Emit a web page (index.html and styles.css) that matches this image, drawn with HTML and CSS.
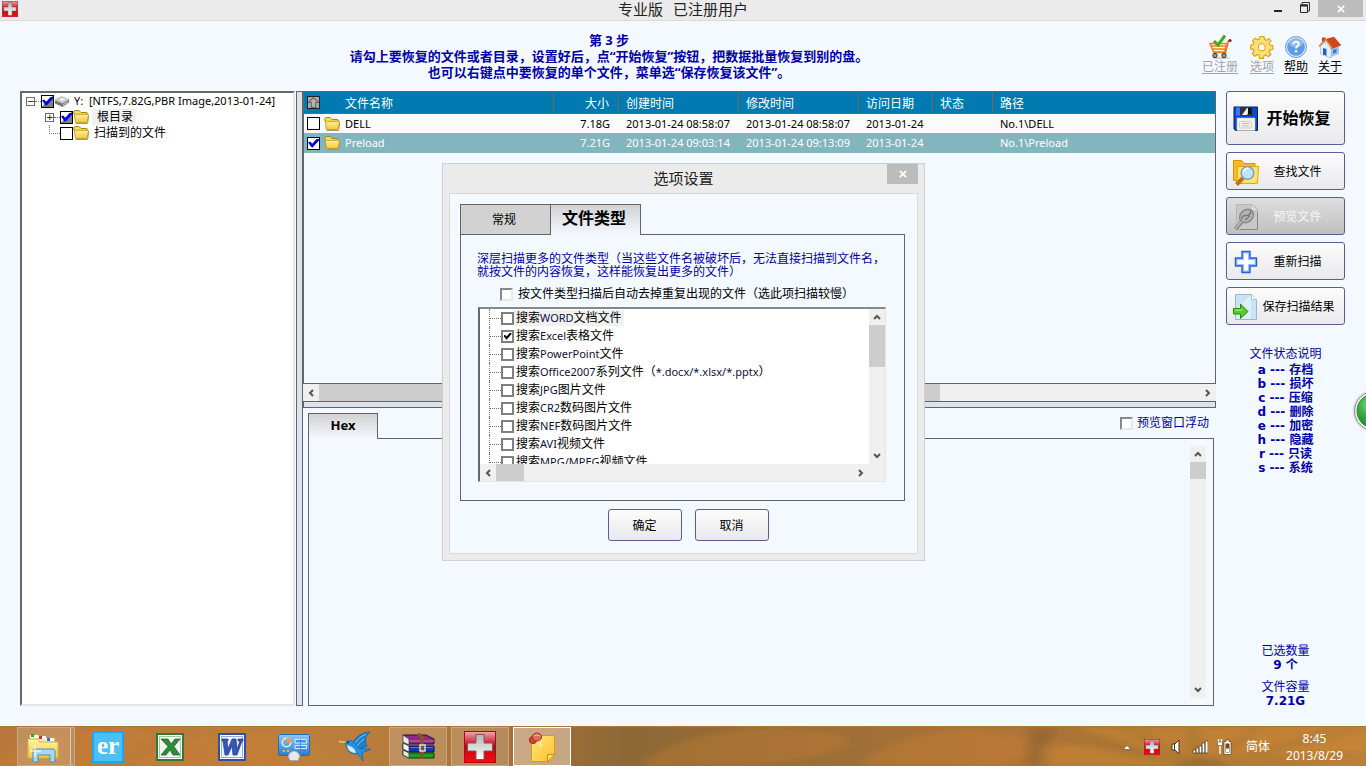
FILE: index.html
```html
<!DOCTYPE html>
<html lang="zh-CN">
<head>
<meta charset="utf-8">
<title>专业版 已注册用户</title>
<link rel="stylesheet" href="styles.css">
</head>
<body>
<svg class="defs" aria-hidden="true">
  <defs>
    <linearGradient id="gFolder" x1="0" y1="0" x2="0" y2="1"><stop offset="0" stop-color="#fff6a8"/><stop offset="1" stop-color="#f4c83c"/></linearGradient>
    <linearGradient id="gRed" x1="0" y1="0" x2="0" y2="1"><stop offset="0" stop-color="#f3a5ae"/><stop offset=".38" stop-color="#cf2036"/><stop offset=".5" stop-color="#c00818"/><stop offset="1" stop-color="#ff0a0a"/></linearGradient>
    <linearGradient id="gSilver" x1="0" y1="0" x2="0" y2="1"><stop offset="0" stop-color="#b4b4b4"/><stop offset="1" stop-color="#ffffff"/></linearGradient>
    <linearGradient id="gBlue" x1="0" y1="0" x2="0" y2="1"><stop offset="0" stop-color="#8cc8f6"/><stop offset="1" stop-color="#2a7cd0"/></linearGradient>
    <linearGradient id="gNote" x1="0" y1="0" x2="1" y2="1"><stop offset="0" stop-color="#ffe680"/><stop offset="1" stop-color="#ffc02a"/></linearGradient>
    <radialGradient id="gGreen" cx=".4" cy=".3" r=".7"><stop offset="0" stop-color="#8fdc8c"/><stop offset=".5" stop-color="#3cab45"/><stop offset="1" stop-color="#1c8a2e"/></radialGradient>
    <symbol id="cross" viewBox="0 0 32 32">
      <rect x="0.5" y="0.5" width="31" height="31" fill="url(#gRed)" stroke="#a80c18"/>
      <path d="M12 3.500h8v8.500h8.500v8H20v8.500h-8V20H3.500v-8H12z" fill="url(#gSilver)" stroke="#7c5a5a"/>
    </symbol>
    <symbol id="folder" viewBox="0 0 16 16">
      <path d="M3 14.500h11.500l1.300-8" fill="none" stroke="#a89868" stroke-width="1"/>
      <path d="M.7 3.500Q.7 1.500 2.500 1.500H6l2 2h5q1.500 0 1.500 1.500v2H3z" fill="#f8dc60" stroke="#b08008"/>
      <path d="M1 4l1.500 9.500H13q1 0 1.200-1L15.500 6q0-.7-.8-.7H4.500q-.8 0-1 .7z" fill="url(#gFolder)" stroke="#c09010" stroke-width=".8"/>
    </symbol>
    <symbol id="drive" viewBox="0 0 16 12">
      <path d="M1 5.500v3L8.500 12 15 7.500V4.500z" fill="#777"/>
      <path d="M1 5L7.500 1.500 15 4.500 8.500 8.500z" fill="#cfcfcf" stroke="#a8a8a8" stroke-width=".6"/>
      <path d="M5 4.500l3-1.500 3 1.300L8 6z" fill="#f4f4f4"/>
      <path d="M9 10l5-3.200" stroke="#d8d8d8"/>
    </symbol>
    <symbol id="up" viewBox="0 0 10 10"><path d="M5 .5L9.500 5H7v4.500H3V5H.5z" fill="#b4b4b4" stroke="#666"/></symbol>
    <symbol id="aLeft" viewBox="0 0 8 8"><path d="M6 1L3 4l3 3" fill="none" stroke="#555" stroke-width="2"/></symbol>
    <symbol id="aRight" viewBox="0 0 8 8"><path d="M2 1l3 3-3 3" fill="none" stroke="#555" stroke-width="2"/></symbol>
    <symbol id="aUp" viewBox="0 0 8 8"><path d="M1 6l3-3 3 3" fill="none" stroke="#555" stroke-width="2"/></symbol>
    <symbol id="aDown" viewBox="0 0 8 8"><path d="M1 2l3 3 3-3" fill="none" stroke="#555" stroke-width="2"/></symbol>
    <symbol id="x" viewBox="0 0 8 8"><path d="M.8.800l6.400 6.400M7.200.800L.8 7.200" stroke="#fff" stroke-width="1.700"/></symbol>
  </defs>
</svg>

<header class="titlebar">
  <svg class="app-icon"><use href="#cross"/></svg>
  <h1>专业版 &nbsp; 已注册用户</h1>
  <div class="win-buttons">
    <button aria-label="最小化"><svg width="8" height="12" viewBox="0 0 8 12"><path d="M0 9h8" stroke="#222" stroke-width="2"/></svg></button>
    <button aria-label="还原"><svg width="10" height="12" viewBox="0 0 10 12"><path d="M2 2V.5h7.500V9H8" fill="none" stroke="#333"/><path d="M.5 3h7v7.500h-7z" fill="none" stroke="#222"/><path d="M0 3.500h8" stroke="#222" stroke-width="2"/></svg></button>
    <button class="close" aria-label="关闭"><svg width="8" height="8"><use href="#x"/></svg></button>
  </div>
</header>

<section class="intro">
  <p class="steps">第 3 步<br>请勾上要恢复的文件或者目录，设置好后，点<q>开始恢复</q>按钮，把数据批量恢复到别的盘。<br>也可以右键点中要恢复的单个文件，菜单选<q>保存恢复该文件</q>。</p>
  <nav class="tools">
    <a class="off wide" href="#reg">
      <svg width="24" height="24" viewBox="0 0 24 24"><ellipse cx="13" cy="23" rx="9" ry="1" fill="#ccc"/><path d="M20.500 5.500l-3 12H6" fill="none" stroke="#e06a10" stroke-width="1.500"/><path d="M2 8.500h17l-2.500 8.500H5.500z" fill="#fff3dc" stroke="#ee8418" stroke-width="1.500"/><path d="M3 11h15M4 14h13" stroke="#ee8418" stroke-width="1.400"/><circle cx="7" cy="20.500" r="2.200" fill="#999" stroke="#333"/><circle cx="16" cy="20.500" r="2.200" fill="#999" stroke="#333"/><circle cx="22" cy="5.500" r="1.600" fill="#a01020"/><path d="M6 6l4 4L17 .5" fill="none" stroke="#43ad18" stroke-width="3"/></svg>
      已注册</a>
    <a class="off" href="#opt">
      <svg width="24" height="24" viewBox="0 0 24 24"><path d="M10 1.500h4l.5 3 1.800.8L19 3.500 21 6l-2 2.500.8 1.500 3 .5v4l-3 .5-.8 1.700 1.800 2.600-2.500 2.400-2.600-1.800-1.700.8-.5 2.600h-4L9 20.200l-1.700-.8-2.600 1.800-2.400-2.500L4 16l-.8-1.600-2.500-.5v-3.700l2.500-.7L4 8 2.500 5.700 5 3.200l2.400 1.600L9 4.200z" fill="#ffe078" stroke="#e3a11c" stroke-width="1.200"/><rect x="8.500" y="9" width="6.500" height="6.500" rx="2" fill="#fffdf0" stroke="#e3a11c"/></svg>
      选项</a>
    <a href="#help">
      <svg width="24" height="24" viewBox="0 0 24 24"><circle cx="12" cy="12" r="10.500" fill="#d8e6fb" stroke="#7898cc"/><circle cx="12" cy="12" r="8.800" fill="#5c9bea"/><ellipse cx="12" cy="8" rx="7" ry="4.500" fill="#fff" opacity=".3"/><path d="M9.300 9.500q0-2.700 2.700-2.700t2.700 2.300q0 1.500-1.500 2.300-1.200.7-1.200 2.100" fill="none" stroke="#fff" stroke-width="1.900"/><circle cx="12" cy="16.300" r="1.200" fill="#fff"/></svg>
      帮助</a>
    <a href="#about">
      <svg width="24" height="24" viewBox="0 0 24 24"><path d="M11 14l10-4v9l-10 4z" fill="#a8c8ea"/><path d="M2.500 11.500L7 7l6 7v9l-10.500-4z" fill="#e8f2ff" stroke="#9cb8dc" stroke-width=".7"/><path d="M4 2.500h3.500V6L4 8.500z" fill="#c04820"/><path d="M7.500 4L16 1.800l7.300 8.500L14 14z" fill="#d04818"/><path d="M1 11.500L7.500 4l7 9.500" fill="none" stroke="#e87840" stroke-width="1.400"/><path d="M5 13l3.500 1v6.800L5 19.500z" fill="#1d63c0"/><path d="M15 15l3.500-1.200v3.700L15 19z" fill="#2f7fd8"/></svg>
      关于</a>
  </nav>
</section>

<main class="work">
  <ul class="tree">
    <li><button class="exp" aria-label="折叠">−</button><i class="dots"></i><label><input type="checkbox" class="cb part" checked><svg class="ic drive"><use href="#drive"/></svg><span class="la">Y: &nbsp;[NTFS,7.82G,PBR Image,2013-01-24]</span></label></li>
    <li class="child"><button class="exp" aria-label="展开">+</button><i class="dots"></i><label><input type="checkbox" class="cb part" checked><svg class="ic"><use href="#folder"/></svg><span class="node current">根目录</span></label></li>
    <li class="child"><i class="elbow"></i><label><input type="checkbox" class="cb"><svg class="ic"><use href="#folder"/></svg><span class="node">扫描到的文件</span></label></li>
  </ul>
  <div class="vsplit"></div>

  <div class="center">
    <div class="files">
      <table>
        <colgroup><col class="c-name"><col class="c-size"><col class="c-time"><col class="c-time"><col class="c-date"><col class="c-state"><col></colgroup>
        <thead><tr>
          <th><div class="name"><button class="upbtn" aria-label="上一级"><svg width="11" height="11"><use href="#up"/></svg></button><span class="head">文件名称</span></div></th>
          <th class="num">大小</th><th>创建时间</th><th>修改时间</th><th>访问日期</th><th>状态</th><th>路径</th>
        </tr></thead>
        <tbody>
          <tr><td><label class="name"><input type="checkbox" class="cb"><svg class="ic"><use href="#folder"/></svg>DELL</label></td><td class="num">7.18G</td><td>2013-01-24 08:58:07</td><td>2013-01-24 08:58:07</td><td>2013-01-24</td><td></td><td>No.1\DELL</td></tr>
          <tr class="selected"><td><label class="name"><input type="checkbox" class="cb" checked><svg class="ic"><use href="#folder"/></svg>Preload</label></td><td class="num">7.21G</td><td>2013-01-24 09:03:14</td><td>2013-01-24 09:13:09</td><td>2013-01-24</td><td></td><td>No.1\Preload</td></tr>
        </tbody>
      </table>
    </div>
    <div class="hbar"><svg><use href="#aLeft"/></svg><div class="track"><div class="thumb main-thumb"></div></div><svg><use href="#aRight"/></svg></div>
    <div class="hsplit"></div>
    <div class="viewer">
      <div class="viewer-top">
        <button class="hex">Hex</button>
        <label class="float"><input type="checkbox" class="sunk">预览窗口浮动</label>
      </div>
      <div class="viewer-body"><div class="vbar"><svg><use href="#aUp"/></svg><div class="track"><div class="thumb"></div></div><svg><use href="#aDown"/></svg></div></div>
    </div>
  </div>

  <aside class="side">
    <button class="btn big">
      <svg width="26" height="26" viewBox="0 0 26 26"><path d="M1 1h23.500v23.500H2.500L1 23z" fill="#0a48d8" stroke="#052050"/><path d="M3 1.500h4v8H3z" fill="#2d7bff"/><path d="M7 1.500h12v8H7z" fill="#333"/><path d="M14 2l-5 7h5l4-7z" fill="#eee"/><path d="M15 2h3.500v6H15z" fill="#111"/><path d="M4 12h18v12.500H4z" fill="#f4f1e6" stroke="#c8c8c8" stroke-width=".6"/><rect x="6.500" y="15.500" width="12" height="6.500" rx="1" fill="none" stroke="#d2d0c4"/><path d="M9 17.500h7M9 20h7" stroke="#c0beb4"/></svg>
      <span>开始恢复</span></button>
    <button class="btn">
      <svg width="28" height="28" viewBox="0 0 28 28"><path d="M1.500 2.500h8l2.500 3h11v17H1.500z" fill="#f8bc22" stroke="#d89010"/><path d="M5.500 8.500h21l-1 17H5z" fill="#ffe46c" stroke="#e0a420"/><path d="M11 20l-6.500 6.500" stroke="#cc6a14" stroke-width="4"/><circle cx="15.500" cy="15" r="6.300" fill="#bfe4fb" stroke="#7d9cc0" stroke-width="1.500"/><path d="M11.500 14q1-4 5-4" fill="none" stroke="#fff" stroke-width="1.500"/></svg>
      <span>查找文件</span></button>
    <button class="btn" disabled>
      <svg width="28" height="28" viewBox="0 0 28 28"><path d="M4.500 1.500h16l5 5v20h-21z" fill="#c8c8c8" stroke="#b4b4b4"/><path d="M8 26.500h17.500V9" fill="none" stroke="#888"/><path d="M20 2v5h5" fill="#ddd"/><path d="M9.500 19L3.500 26" stroke="#888" stroke-width="4"/><path d="M9 19l-5.500 6.500" stroke="#e2e2e2"/><ellipse cx="14.500" cy="13" rx="7.500" ry="6" transform="rotate(-40 14.500 13)" fill="#b4b4b4" stroke="#8a8a8a" stroke-width="1.600"/><path d="M10 16q0-4 4-3.500t5-4.500M13 17l5-4" fill="none" stroke="#777" stroke-width="1.400"/></svg>
      <span>预览文件</span></button>
    <button class="btn">
      <svg width="28" height="28" viewBox="0 0 28 28"><path d="M10 3.500h8v6.500h6.500v8H18v6.500h-8V18H3.500v-8H10z" fill="#9cc0ff" stroke="#2c5cd8" stroke-width="1.400"/><path d="M12 5.500h4V12h6.500v4H16v6.500h-4V16H5.500v-4H12z" fill="#fff"/></svg>
      <span>重新扫描</span></button>
    <button class="btn long">
      <svg width="28" height="28" viewBox="0 0 28 28"><path d="M3.500 1.500h16l5 5v20h-21z" fill="#c8e3f4" stroke="#98b8cc"/><path d="M4 16L19 2v24H4z" fill="#e6f3fc" opacity=".7"/><path d="M19.500 1.500v5h5" fill="#fff" stroke="#a8c0d0"/><path d="M1.500 15.500h7v-4.500l7.500 7.500-7.500 7v-4.500h-7z" fill="#52ce2c" stroke="#238a10"/><path d="M3 17h7.500" stroke="#b6f090"/></svg>
      <span>保存扫描结果</span></button>
    <section class="legend">
      <h2>文件状态说明</h2>
      <ul><li>a --- 存档</li><li>b --- 损坏</li><li>c --- 压缩</li><li>d --- 删除</li><li>e --- 加密</li><li>h --- 隐藏</li><li>r --- 只读</li><li>s --- 系统</li></ul>
    </section>
    <dl class="counts"><dt>已选数量</dt><dd>9 个</dd><dt>文件容量</dt><dd>7.21G</dd></dl>
  </aside>
</main>

<svg class="bubble" width="20" height="46" viewBox="0 0 20 46" aria-hidden="true"><circle cx="28" cy="23" r="21.500" fill="#ccc" opacity=".5"/><circle cx="28" cy="23" r="19.500" fill="#f0f0f0" stroke="#8a8a8a"/><circle cx="28" cy="23" r="17" fill="url(#gGreen)" stroke="#2b8a3a"/></svg>

<section class="dialog" role="dialog" aria-label="选项设置">
  <div class="dlg-title"><h2>选项设置</h2><button class="dlg-close" aria-label="关闭"><svg width="8" height="8"><use href="#x"/></svg></button></div>
  <div class="dlg-body">
    <div class="tabs" role="tablist"><button role="tab">常规</button><button role="tab" class="on" aria-selected="true">文件类型</button></div>
    <div class="panel">
      <p class="note">深层扫描更多的文件类型（当这些文件名被破坏后，无法直接扫描到文件名，就按文件的内容恢复，这样能恢复出更多的文件）</p>
      <label class="dedupe"><input type="checkbox" class="sunk">按文件类型扫描后自动去掉重复出现的文件（选此项扫描较慢）</label>
      <div class="list">
        <ul class="types">
          <li><label><input type="checkbox" class="tick"><span class="current">搜索<b>WORD</b>文档文件</span></label></li>
          <li><label><input type="checkbox" class="tick" checked><span>搜索<b>Excel</b>表格文件</span></label></li>
          <li><label><input type="checkbox" class="tick"><span>搜索<b>PowerPoint</b>文件</span></label></li>
          <li><label><input type="checkbox" class="tick"><span>搜索<b>Office2007</b>系列文件（<b>*.docx/*.xlsx/*.pptx</b>）</span></label></li>
          <li><label><input type="checkbox" class="tick"><span>搜索<b>JPG</b>图片文件</span></label></li>
          <li><label><input type="checkbox" class="tick"><span>搜索<b>CR2</b>数码图片文件</span></label></li>
          <li><label><input type="checkbox" class="tick"><span>搜索<b>NEF</b>数码图片文件</span></label></li>
          <li><label><input type="checkbox" class="tick"><span>搜索<b>AVI</b>视频文件</span></label></li>
          <li><label><input type="checkbox" class="tick"><span>搜索<b>MPG/MPEG</b>视频文件</span></label></li>
        </ul>
        <div class="vbar"><svg><use href="#aUp"/></svg><div class="track"><div class="thumb list-thumb"></div></div><svg><use href="#aDown"/></svg></div>
        <div class="hbar"><svg><use href="#aLeft"/></svg><div class="track"><div class="thumb"></div></div><svg><use href="#aRight"/></svg></div>
      </div>
    </div>
    <div class="actions"><button class="btn">确定</button><button class="btn">取消</button></div>
  </div>
</section>

<footer class="taskbar">
  <svg class="petals" viewBox="0 0 1366 40" preserveAspectRatio="none" aria-hidden="true">
    <defs><filter id="soft"><feGaussianBlur stdDeviation="6 3"/></filter></defs>
    <g filter="url(#soft)">
    <g fill="#cf8030" opacity=".3"><path d="M120 40Q170 8 250 4q60 0 80 36z"/><path d="M0 30q60-30 130-28l30 6-60 32H0z"/><path d="M640 40q40-38 140-40 90 6 60 22t-120 18z"/><path d="M860 40q30-34 110-38l50 8q30 16-20 30z"/></g>
    <g fill="#d08a34" opacity=".5"><path d="M1040 20q50-6 100 12l60 8H1050z"/><path d="M1075 0h50l50 34z"/><path d="M1130 0h56l6 34z"/><path d="M1196 0h56l-44 34z"/><path d="M1260 0h70l-110 36z"/><path d="M1366 4v22q-60-4-140 12z"/></g>
    <g fill="#6e5530" opacity=".35"><path d="M1028 0h30l-18 40h-14z"/><path d="M1170 40q30-16 60 0z"/></g>
    </g>
  </svg>
  <div class="apps">
    <button class="open stacked" aria-label="资源管理器"><svg width="34" height="32" viewBox="0 0 34 32"><path d="M4 4h9l2 3h14v20H4z" fill="#f5eaa4" stroke="#c8a848"/><path d="M4 4h8v3H4z" fill="#fff"/><path d="M5 3h3v3H5z" fill="#28a828"/><path d="M12 5h8v3h-8z" fill="#fff"/><path d="M13 5h3v3h-3z" fill="#d83020"/><path d="M20 7h8v3h-8z" fill="#fff"/><path d="M21 7h3v3h-3z" fill="#2870d0"/><path d="M2 8h10l2 3h18v16H2z" fill="url(#gFolder)" stroke="#d6b04c"/><path d="M7 31V20q0-2 2-2h18q2 0 2 2v11h-5v-7H12v7z" fill="#a8d8f0" stroke="#4c90b8"/><path d="M9 14v12M4 20h11" stroke="#fff"/></svg></button>
    <button aria-label="er"><span class="er">er</span></button>
    <button aria-label="Excel"><svg width="28" height="28" viewBox="0 0 28 28"><rect x="1" y="1" width="26" height="26" fill="#fff" stroke="#2e7a36" stroke-width="2"/><rect x="3.500" y="3.500" width="21" height="21" fill="#eef8ee" stroke="#9ccc9c"/><path d="M5 6h7l3 5 4-5h5l-6 7.500 6 8.500h-7l-3-5-4 5H5l7-8.500z" fill="#2f8a38" stroke="#17601e" stroke-width=".7"/></svg></button>
    <button aria-label="Word"><svg width="28" height="28" viewBox="0 0 28 28"><rect x="1" y="1" width="26" height="26" fill="#fff" stroke="#3050a8" stroke-width="2"/><rect x="3.500" y="3.500" width="21" height="21" fill="#f0f4ff" stroke="#98acdc"/><path d="M4 6h6v2H9l1 8 4-10h4l1 10 3-8h-2V6h5v2h-1l-5 14h-4l-1-9-4 9H7L5 8H4z" fill="#3258b4" stroke="#1c3a88" stroke-width=".7"/></svg></button>
    <button aria-label="控制面板"><svg width="32" height="30" viewBox="0 0 32 30"><rect x=".5" y="2.500" width="31" height="21" rx="1" fill="url(#gBlue)" stroke="#246cb4"/><circle cx="8.500" cy="10.500" r="4.200" fill="none" stroke="#e0f0ff" stroke-width="1.500"/><path d="M8.500 10.500V5.500a5 5 0 0 1 5 5z" fill="#ff9c1a"/><path d="M17 7.500h11.500v3.500H17zM17 13.500h11.500v3H17z" fill="#4690da" stroke="#dff0ff"/><path d="M22.500 7v10" stroke="#4690da"/><circle cx="6" cy="19" r="1.300" fill="#ffb040"/><circle cx="10" cy="19" r="1.300" fill="#ffb040"/><path d="M10 24q2-5 6-5t6 5l-2 4.500h-8z" fill="#e8e8e8" stroke="#a8a8a8"/></svg></button>
    <button aria-label="蓝鸟"><svg width="34" height="32" viewBox="0 0 34 32"><path d="M0 10.500l8 1" stroke="#f0d060" stroke-width="1.500"/><path d="M13 12Q20 1 31 1 24 6 28 15l-9 4z" fill="#1c80d0" stroke="#125a9c" stroke-width=".6"/><path d="M6 12q2-3.500 6-2.500 4 2 8 8l12 .5-9 4 1 8-5-7q-10 0-11-6z" fill="#2492e0" stroke="#125a9c" stroke-width=".6"/><path d="M8 14q1 8 9 8-1-4-4-6z" fill="#d8e8f0"/><circle cx="9" cy="11.500" r=".9" fill="#111"/><path d="M16 12q5-7 11-9M18 15q4-5 7-7" fill="none" stroke="#7cc8ff"/></svg></button>
    <button class="open" aria-label="WinRAR"><svg width="34" height="28" viewBox="0 0 34 28"><path d="M2 2h23l8 4v5H8z" fill="#8a2a86" stroke="#2a0c30"/><path d="M8 8h25" stroke="#c070b8"/><path d="M2 2l6 4v6l-6-3z" fill="#e8e8e8" stroke="#333" stroke-width=".7"/><path d="M2 10l6 3h25v6H8l-6-3z" fill="#1734b8" stroke="#081048"/><path d="M2 10l6 3v6l-6-3z" fill="#f4f4f4" stroke="#333" stroke-width=".7"/><path d="M2 17l6 3h25v5H8l-6-3z" fill="#18a028" stroke="#063c0c"/><path d="M2 17l6 3v5l-6-3z" fill="#e8e8e8" stroke="#333" stroke-width=".7"/><path d="M9 14.500h23" stroke="#4c78f0"/><path d="M17 1l4 3.500V26" fill="none" stroke="#8a5420" stroke-width="3.500"/><rect x="19" y="12" width="5" height="6" fill="none" stroke="#ddd" stroke-width="1.500"/></svg></button>
    <button class="open" aria-label="数据恢复"><svg width="32" height="32"><use href="#cross"/></svg></button>
    <button class="open active" aria-label="便笺"><svg width="32" height="32" viewBox="0 0 32 32"><path d="M5.500 4.500h23v21l-5 5h-18z" fill="url(#gNote)" stroke="#d89a18"/><path d="M21.500 30.500v-7h7z" fill="#ffe07c" stroke="#d88a18"/><path d="M12 12l4 4M10 11l6-3M14 9l1 7" stroke="#fff4c0"/><circle cx="7" cy="9" r="3.600" fill="#c84838" stroke="#8c2c20"/><ellipse cx="11" cy="6" rx="4.600" ry="4" fill="#e06a58" stroke="#a03c30"/><path d="M8 5q3-2 6 0" fill="none" stroke="#ffb8a8"/></svg></button>
  </div>
  <div class="tray">
    <svg width="10" height="16" viewBox="0 0 10 16"><path d="M1 10.500l4-4 4 4z" fill="#fff" stroke="#5a4020" stroke-width=".6"/></svg>
    <svg width="16" height="16"><use href="#cross"/></svg>
    <svg width="16" height="16" viewBox="0 0 16 16"><path d="M4 5h3l4-4v14l-4-4H4z" fill="#fff" stroke="#4a3010"/><path d="M6.500 5v6" stroke="#4a3010"/></svg>
    <svg width="16" height="16" viewBox="0 0 16 16"><path d="M1 11h3v3H1zM4 9h3v5H4zM7 7h3v7H7zM10 4h3v10h-3zM13 2h3v12h-3z" fill="#fff" stroke="#4a3010" stroke-width=".7"/></svg>
    <svg width="16" height="16" viewBox="0 0 16 16"><path d="M8 2.500h2V1h3v1.500h2v13H8z" fill="#fff" stroke="#4a3010" stroke-width=".6"/><path d="M9.500 4.500h4v9h-4z" fill="#6a4a20"/><path d="M10 9.500h3v3.500h-3z" fill="#fff"/><path d="M2.500 0v3M5.500 0v3M4 6v9" stroke="#fff" stroke-width="1.400"/><path d="M1.500 3h5v3.500h-5z" fill="#fff" stroke="#4a3010" stroke-width=".5"/></svg>
    <span class="lang">简体</span>
    <time class="clock">8:45<br>2013/8/29</time>
  </div>
</footer>
</body>
</html>
```
FILE: styles.css
```css
* { box-sizing: border-box; }
html, body { height: 100%; }
body {
  margin: 0; min-height: 600px; display: flex; flex-direction: column; overflow: hidden; position: relative;
  background: #f4f8ff; color: #000;
  font: 12px/16px "Liberation Sans", "Noto Sans CJK SC", sans-serif;
}
h1, h2, p, ul, dl, dd { margin: 0; padding: 0; font-size: inherit; font-weight: inherit; }
ul { list-style: none; }
button { font: inherit; color: inherit; margin: 0; padding: 0; border: 0; background: none; }
svg { display: block; flex: none; }
input { margin: 0; flex: none; }
label { display: flex; align-items: center; }
.defs { position: absolute; width: 0; height: 0; }
.la { font: 11px/16px "Noto Sans", sans-serif; white-space: nowrap; }

/* window title */
.titlebar { flex: none; height: 21px; display: grid; grid-template-columns: 1fr auto 1fr; background: #ebebeb; border-bottom: 1px solid #d9d9d9; }
.titlebar h1 { font: 15px/17px "Noto Sans CJK SC", sans-serif; color: #222; white-space: pre; }
.app-icon { width: 16px; height: 16px; margin: 1px 0 0 2px; }
.win-buttons { display: flex; justify-content: flex-end; align-items: flex-start; padding-right: 3px; }
.win-buttons button { width: 27px; height: 16px; display: grid; place-items: center; }
.win-buttons .close { width: 45px; height: 17px; background: #bcbcbc; }

/* instructions and tools */
.intro { flex: none; height: 70px; display: grid; grid-template-columns: minmax(0, 1fr) 148px; }
.steps { padding-top: 11px; text-align: center; font: bold 13px/16px "Noto Sans", "Noto Sans CJK SC", sans-serif; color: #0000a8; }
.steps q { quotes: "“" "”"; }
.tools { display: flex; justify-content: flex-end; gap: 10px; padding: 14px 24px 0 0; margin-left: -20px; }
.tools a { width: 24px; display: flex; flex-direction: column; align-items: center; color: #000; text-decoration: underline; text-underline-offset: 2px; white-space: nowrap; }
.tools .wide { width: 40px; }
.tools a.off { color: #a2a2a2; }

/* work area */
.work { flex: 1; min-height: 0; display: grid; grid-template-columns: 275px 8px minmax(0, 1fr) 119px; padding: 0 21px 20px 20px; }
.tree { background: #fff; border: 2px solid #696969; border-color: #696969 #e6e6e6 #e6e6e6 #696969; padding-left: 4px; }
.tree li { display: flex; align-items: center; height: 16px; }
.tree .child { padding-left: 19px; }
.exp { width: 9px; height: 9px; border: 1px solid #6c6c6c; font: 9px/7px "DejaVu Sans", sans-serif; background: #fff; }
.dots { width: 6px; border-top: 1px dotted #777; }
.elbow { width: 11px; height: 9px; margin-left: 4px; align-self: flex-start; border: 0 dotted #777; border-width: 0 0 1px 1px; }
.ic { width: 16px; height: 16px; }
.drive { height: 12px; margin-right: 4px; }
.node { margin-left: 3px; padding: 0 2px; white-space: nowrap; }
.current { background: #f0f0f0; }
.tree .node.current { padding: 0 3px 0 5px; }
.cb, .tick, .sunk { appearance: none; width: 13px; height: 13px; background: #fff; border: 1px solid #000; display: grid; place-items: center; }
.cb:checked::before, .tick:checked::before { content: ""; width: 11px; height: 9px; background: #0000f0; clip-path: polygon(0 45%, 20% 32%, 38% 58%, 82% 0, 100% 0, 100% 22%, 42% 100%, 34% 100%); }
.cb.part:checked { background: linear-gradient(135deg, #fff 45%, #808080 50%); }
.tick { border: 2px solid #808080; }
.tick:checked::before { background: #000; width: 8px; height: 7px; }
.sunk { border: 2px solid; border-color: #888 #e8e8e8 #e8e8e8 #888; }
.vsplit { margin: 0 0 0 1px; background: #dbe4ee; border: 1px solid #646464; }

.center { display: flex; flex-direction: column; min-width: 0; margin-right: 10px; }
.files { flex: 0 0 293px; border: 1px solid #646464; overflow: hidden; }
table { width: 100%; border-collapse: separate; border-spacing: 0; table-layout: fixed; font: 11px/16px "Noto Sans", sans-serif; }
.c-name { width: 250px; } .c-size { width: 65px; } .c-time { width: 120px; } .c-date { width: 74px; } .c-state { width: 60px; }
th, td { padding: 0 0 0 7px; text-align: left; font-weight: normal; white-space: nowrap; }
th:first-child, td:first-child { padding-left: 3px; }
th { height: 22px; background: #007ab1; color: #fff; border: 0 solid #73665c; border-width: 0 1px 1px 0; font: 12px/16px "Noto Sans CJK SC", sans-serif; }
th:last-child { border-right: 0; }
td { height: 20px; background: #fafafa; }
tr:first-child td { height: 19px; }
.selected td { background: #83b5be; color: #fff; }
.num { text-align: right; padding: 0 9px 0 0; }
.name { display: flex; align-items: center; }
.name .ic { margin: 0 5px 0 4px; }
.upbtn { width: 13px; height: 13px; border: 1px solid #222; background: #aaa; display: grid; place-items: center; }
.head { margin-left: 25px; }

.hbar, .vbar { display: flex; align-items: center; background: #f0f0f0; }
.vbar { flex-direction: column; width: 16px; }
.hbar { height: 17px; }
.hbar > svg, .vbar > svg { width: 8px; height: 8px; margin: 4px; }
.track { flex: 1; align-self: stretch; display: flex; }
.vbar .track { flex-direction: column; }
.thumb { background: #cdcdcd; flex: 0 0 28px; }
.vbar .thumb { flex-basis: 17px; }
.track .main-thumb { flex-basis: 70.5%; }
.vbar .list-thumb { flex-basis: 42px; }
.hsplit { flex: none; height: 7px; background: #dbe4ee; border: 1px solid #646464; }

.viewer { flex: 1; min-height: 0; display: flex; flex-direction: column; padding: 5px 2px 0 5px; }
.viewer-top { display: flex; justify-content: space-between; height: 26px; flex: none; z-index: 1; }
.hex { width: 70px; border: 1px solid #646464; border-bottom: 0; background: linear-gradient(#d2d2d2, #f4f8ff); font: bold 13px/22px "Noto Sans", sans-serif; padding-bottom: 3px; }
.float { gap: 4px; height: 20px; padding-right: 5px; color: #0000a8; }
.viewer-body { flex: 1; margin-top: -1px; border: 1px solid #646464; display: flex; justify-content: flex-end; padding: 7px 7px; }

/* right-hand commands */
.side { display: flex; flex-direction: column; gap: 7px; }
.btn { height: 38px; border: 1px solid #5c5c98; border-radius: 3px; background: linear-gradient(#fcfcfc, #e9e9ec); display: flex; align-items: center; padding: 2px 0 0 5px; flex: none; }
.btn span { flex: 1; text-align: center; padding-right: 9px; white-space: nowrap; }
.btn.long span { padding: 0 7px 0 0; }
.btn.big { height: 54px; font-size: 16px; font-weight: bold; padding-left: 6px; }
.btn.big span { padding: 0 6px 0 0; }
.btn:disabled { background: linear-gradient(#dedede, #c0c0c0); color: #f6f6f6; }
.legend { margin-top: 14px; text-align: center; color: #0000a8; }
.legend li { font: bold 12px/14px "DejaVu Sans", "Noto Sans CJK SC", sans-serif; height: 14px; }
.legend h2 { margin-bottom: 1px; }
.counts { margin: auto 0 -2px; text-align: center; color: #0000a8; line-height: 14px; }
.counts dd { font: bold 12px/14px "DejaVu Sans", "Noto Sans CJK SC", sans-serif; }
.counts dd + dt { margin-top: 8px; }
.bubble { position: absolute; right: 0; top: 388px; }

/* options dialog */
.dialog { position: absolute; top: 163px; left: 50%; margin-left: -241px; width: 483px; padding: 0 6px 6px; background: #ebebeb; border: 1px solid #cfcfcf; display: flex; flex-direction: column; }
.dlg-title { display: grid; grid-template-columns: 31px 1fr 31px; height: 29px; }
.dlg-title h2 { grid-column: 2; text-align: center; font: 15px/27px "Noto Sans CJK SC", sans-serif; color: #222; }
.dlg-close { height: 20px; background: #bcbcbc; display: grid; place-items: center; }
.dlg-body { background: #f4f8ff; border: 1px solid #d9d9d9; padding: 10px 12px 12px 10px; }
.tabs { display: flex; height: 31px; position: relative; z-index: 1; }
.tabs button { width: 91px; border: 1px solid #646464; background: #d2d2d2; padding-right: 3px; }
.tabs .on { width: 91px; margin-left: -1px; border-bottom: 0; background: linear-gradient(#d2d2d2, #f4f8ff) padding-box; font-size: 16px; font-weight: bold; padding-bottom: 2px; }
.panel { margin-top: -1px; border: 1px solid #646464; padding: 18px 18px 18px 16px; }
.note { color: #0000a8; line-height: 13px; width: 410px; }
.dedupe { gap: 5px; margin: 7px 0 5px 23px; white-space: nowrap; }
.list { display: grid; grid-template-columns: 1fr 16px; grid-template-rows: 155px 17px; margin-left: 1px; border: 2px solid; border-color: #888 #e6e6e6 #e6e6e6 #696969; border-right-width: 1px; border-bottom-width: 1px; background: #fff; }
.types { overflow: hidden; padding-left: 9px; }
.types li { height: 18px; border-left: 1px dotted #777; display: flex; align-items: center; }
.types li::before { content: ""; width: 11px; border-top: 1px dotted #777; }
.types label { height: 18px; }
.types span { padding: 0 2px; line-height: 16px; white-space: nowrap; }
.types b { font: 11px/16px "Noto Sans", sans-serif; color: #101038; }
.list .hbar { grid-column: 1 / -1; padding-right: 16px; }
.actions { display: flex; justify-content: center; gap: 13px; padding: 8px 0 0 11px; }
.actions .btn { width: 74px; height: 32px; padding: 2px 0 0; justify-content: center; }

/* taskbar */
.taskbar { flex: none; height: 40px; position: relative; display: flex; justify-content: space-between; color: #fff; border-top: 1px solid #a87840; background: linear-gradient(90deg, #b8783c, #bc7e3c 25%, #a87438 36%, #8c6836 46%, #9c6e38 60%, #b07438 75%, #a87434 82%, #bc7f38); }
.petals { position: absolute; inset: 0; width: 100%; height: 100%; }
.apps, .tray { position: relative; display: flex; }
.apps { gap: 4px; padding-left: 17px; }
.apps button { width: 58px; display: grid; place-items: center; border: 1px solid transparent; }
.apps .open { border-color: #c8a880; background: rgba(215, 195, 175, .3); }
.apps .active { border: 1px solid #fff; background: rgba(235, 215, 195, .55); }
.apps .stacked { box-shadow: inset -3px 0 #b89068, inset -4px 0 #e0c8a8; padding-right: 6px; }
.er { width: 32px; height: 32px; background: #4cc0f4; border: 2px solid #18a8f0; font: bold 25px/25px "Liberation Serif", serif; color: #fff; }
.tray { align-items: center; gap: 8px; padding-right: 23px; }
.tray > svg:first-child { margin-right: 4px; }
.lang { margin: 0 8px 0 6px; }
.clock { text-align: center; font: 12px/17px "Noto Sans", sans-serif; }
```
